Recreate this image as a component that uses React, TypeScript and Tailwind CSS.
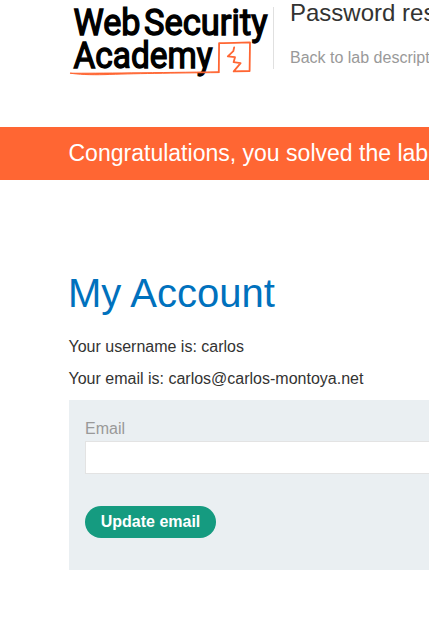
function Logo() {
  return (
    <svg className="block shrink-0" width="205" height="85" viewBox="69 0 205 85" role="img" aria-label="Web Security Academy">
      <g fill="#000" stroke="#000" strokeWidth="1.4" fontFamily="Roboto, 'Liberation Sans', sans-serif" fontWeight="400" fontSize="36.5">
        <text x="73.5" y="35.3" textLength="67" lengthAdjust="spacingAndGlyphs">Web</text>
        <text x="144" y="35.3" textLength="123.5" lengthAdjust="spacingAndGlyphs">Security</text>
        <text x="73.5" y="67.5" textLength="139" lengthAdjust="spacingAndGlyphs">Academy</text>
      </g>
      <g fill="none" stroke="#ff6633" strokeLinecap="round" strokeLinejoin="round">
        <path strokeWidth="1" fill="#ff6633" d="M70.5 73.2 C95 73.4 160 72.6 218.8 71.8 L218.8 72.6 C175 73 130 73.6 105 74.6 C90 75 78 74.4 70.5 73.2 Z" />
        <path strokeWidth="1.8" d="M218.8 72.2 L219.1 43.1 C229 42.7 240 42.6 250 42.4 L249.6 71 L233.7 71.4 L240.6 63.2 L233.6 62.2 L235 57.2 L227.8 56.4 L233.3 51.2 L234.2 47.3" />
      </g>
    </svg>
  );
}

export default function App() {
  return (
    <div className="h-[622px] w-full overflow-hidden bg-white font-['Liberation_Sans',Arial,sans-serif] text-base text-[#333332]">
      <header className="flex h-[127px] items-start pl-[69px] whitespace-nowrap">
        <Logo />
        <div className="-ml-px mt-[7px] h-[62px] shrink-0 border-r border-[#e0e0e0]" />
        <div className="shrink-0 pl-4">
          <h2 className="text-2xl leading-[26px]">Password reset broken logic</h2>
          <a className="mt-[22px] block leading-[19px] text-[#999999]">Back to lab description</a>
        </div>
      </header>
      <section className="flex h-[53px] items-center bg-[#ff6633] pl-[68.5px] whitespace-nowrap text-white">
        <p className="text-[23px] leading-[53px] tracking-[0.01px]">Congratulations, you solved the lab!</p>
      </section>
      <main className="pt-[90px] pl-[69px]">
        <h1 className="-ml-px text-[40px] leading-[46px] text-[#0071bd]">My Account</h1>
        <p className="mt-[21px] -ml-[0.5px] leading-[19px]">Your username is: carlos</p>
        <p className="mt-[13px] -ml-[0.5px] leading-[19px]">Your email is: carlos@carlos-montoya.net</p>
        <form className="mt-[12px] h-[170px] bg-[#eaeff2] pt-[19px] pl-4">
          <label className="block leading-[19px] text-[#999999]">Email</label>
          <input className="mt-[3px] block h-[33px] w-full border border-r-0 border-[#e3e3e3] bg-white px-2 outline-none" />
          <button type="button" className="mt-[32px] block h-8 w-[131px] rounded-full bg-[#159b80] leading-8 font-bold text-white">Update email</button>
        </form>
      </main>
    </div>
  );
}
